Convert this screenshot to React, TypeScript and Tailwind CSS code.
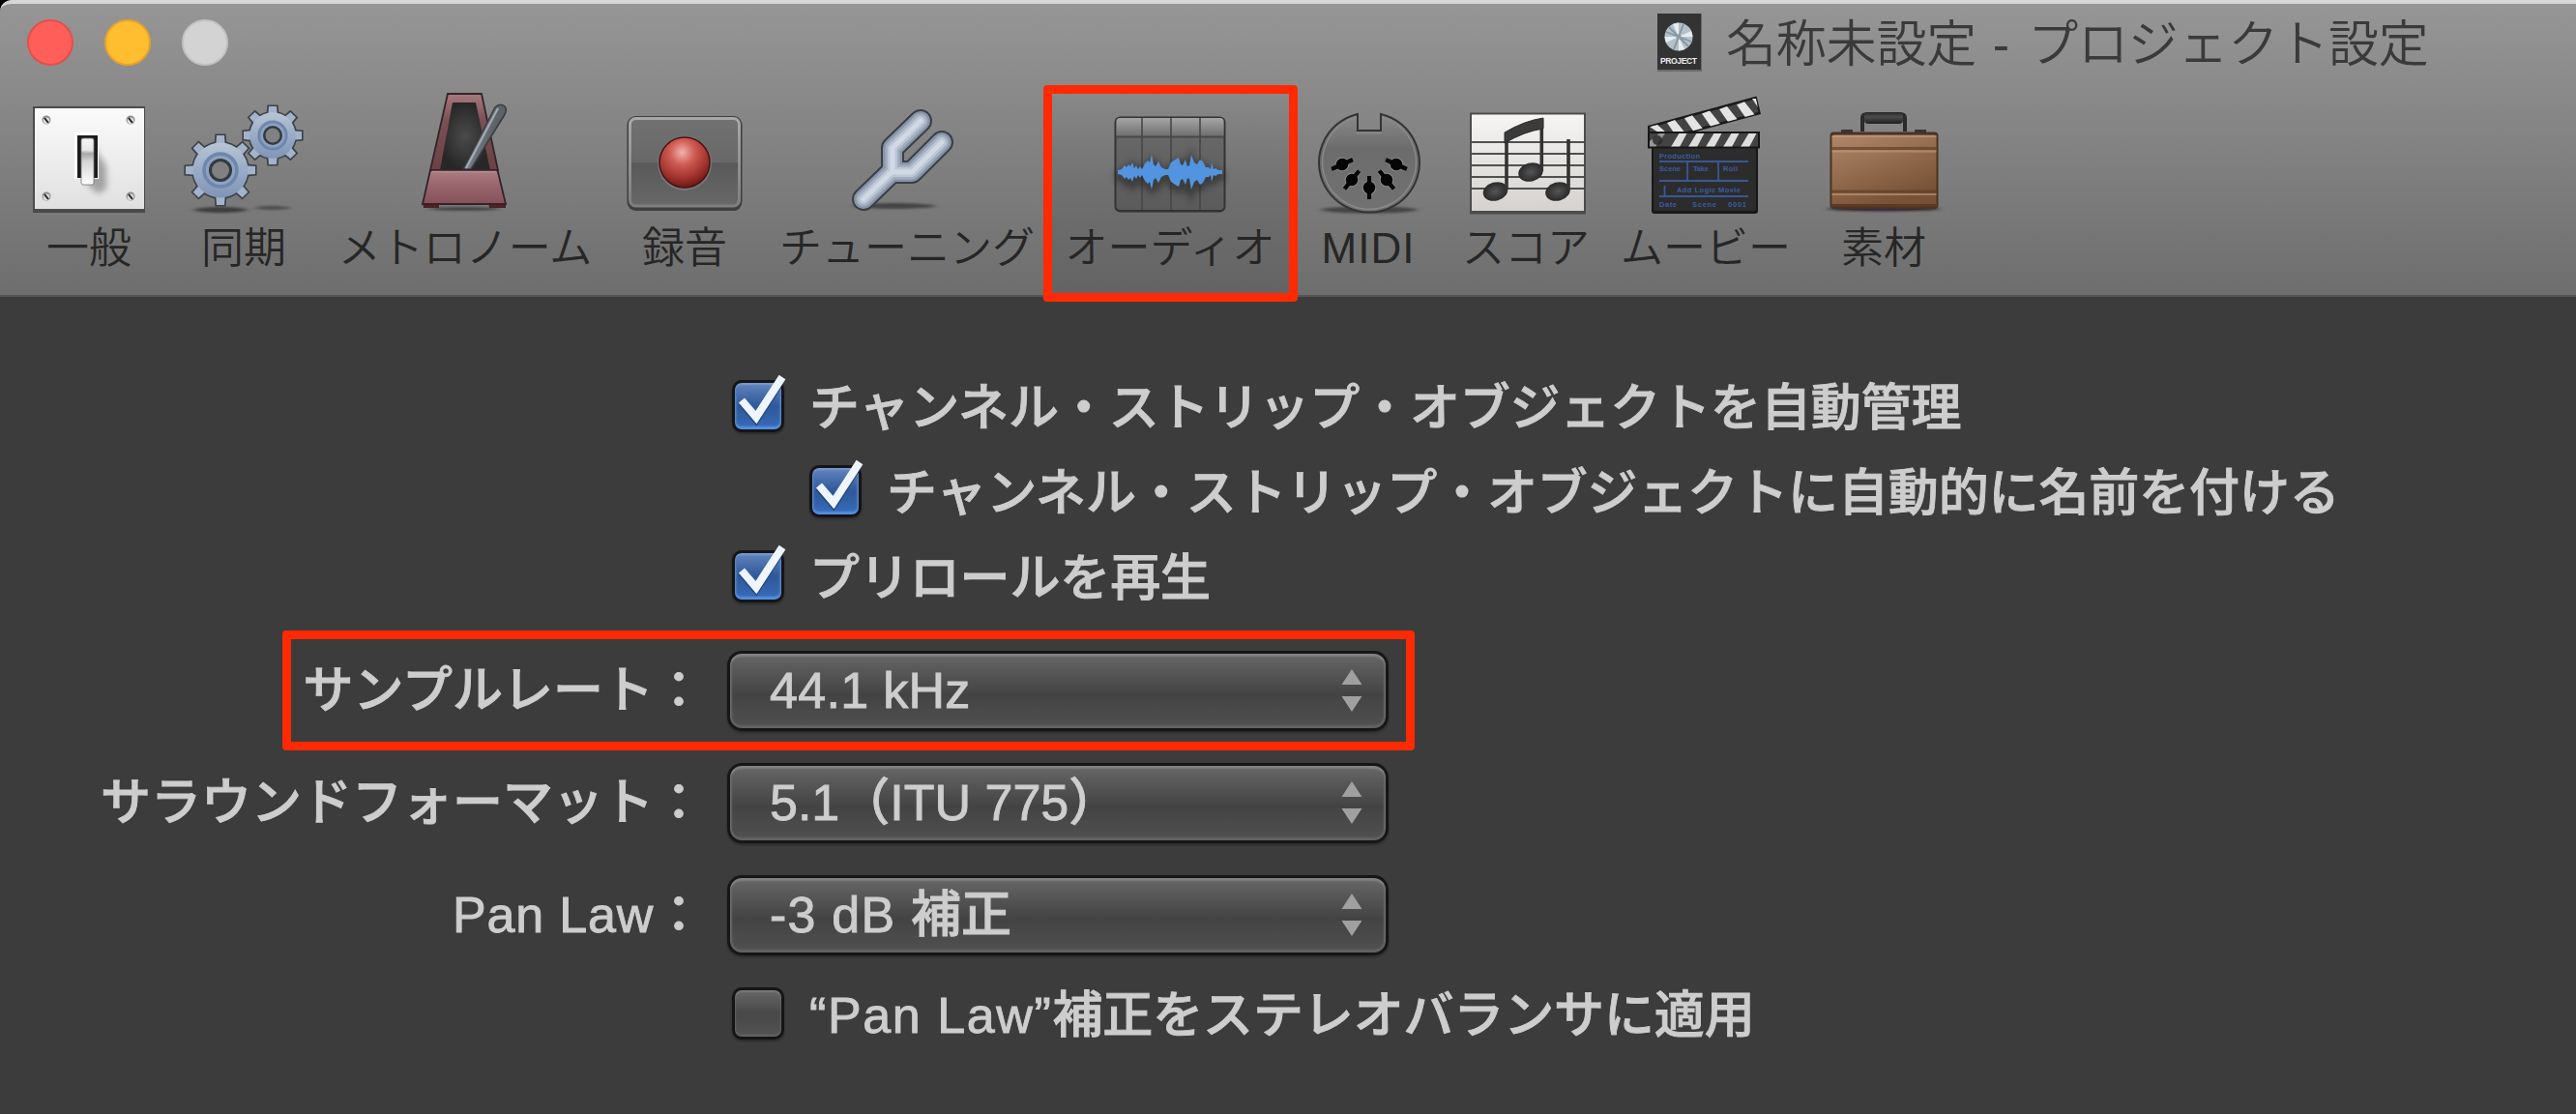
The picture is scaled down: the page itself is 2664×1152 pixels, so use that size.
import type { ReactNode } from "react";

// Every toolbar icon shares one artboard, the viewBox picks its own slice.
const Icon = ({ x, w, children }: { x: number; w: number; children: ReactNode }) => (
  <svg width={w} height={136} viewBox={`${x} 88 ${w} 136`} className="block shrink-0">
    {children}
  </svg>
);

const Screw = ({ x, y }: { x: number; y: number }) => (
  <g>
    <circle cx={x} cy={y} r="4.5" fill="#8e8e8e" />
    <circle cx={x} cy={y + 0.8} r="3.4" fill="#dcdcdc" />
    <path d={`M${x - 2} ${y - 2}l4 5`} stroke="#222" strokeWidth="2" />
  </g>
);

const GeneralIcon = () => (
  <Icon x={32} w={120}>
    <defs>
      <linearGradient id="plate" x1="0" y1="0" x2="0" y2="1">
        <stop offset="0" stopColor="#fbfbfb" />
        <stop offset="1" stopColor="#e0e0e0" />
      </linearGradient>
      <linearGradient id="lever" x1="0" y1="0" x2="0" y2="1">
        <stop offset="0" stopColor="#f4f4f4" />
        <stop offset="0.25" stopColor="#e8e8e8" />
        <stop offset="0.33" stopColor="#a8a8a8" />
        <stop offset="0.5" stopColor="#d5d5d5" />
        <stop offset="1" stopColor="#ffffff" />
      </linearGradient>
      <filter id="soft" x="-50%" y="-50%" width="200%" height="200%">
        <feGaussianBlur stdDeviation="3" />
      </filter>
    </defs>
    <rect x="34" y="110" width="116" height="110" fill="#4a4a4a" />
    <rect x="36" y="112" width="113" height="104" fill="url(#plate)" />
    <Screw x={48} y={124} />
    <Screw x={135} y={124} />
    <Screw x={48} y={203} />
    <Screw x={135} y={203} />
    <path d="M96 150L110 172V196L100 200L90 190Z" fill="#8b8b8b" opacity="0.75" filter="url(#soft)" />
    <rect x="77" y="137" width="25" height="48" fill="#fff" />
    <rect x="80" y="140" width="21" height="44" fill="#1c1c1c" />
    <rect x="84" y="143" width="13" height="48" rx="2" fill="url(#lever)" stroke="#777" strokeWidth="0.8" />
  </Icon>
);

const Gear = ({ cx, cy, r }: { cx: number; cy: number; r: number }) => {
  const body = r * 0.79;
  const teeth = [0, 45, 90, 135, 180, 225, 270, 315];
  return (
    <g transform={`translate(${cx} ${cy})`}>
      {[0, 1].map((layer) => (
        <g key={layer} fill={layer ? "url(#steel)" : "#3c4149"}>
          {teeth.map((a) => {
            const g = layer ? 0 : 1.6;
            return (
              <path
                key={a}
                transform={`rotate(${a})`}
                fill={layer ? "#a3b3c9" : "#3c4149"}
                d={`M${-4 - g} ${-r - g}h${8 + 2 * g}l1 ${r * 0.4}h${-10 - 2 * g}z`}
              />
            );
          })}
          <circle r={body + (layer ? 0 : 1.6)} />
        </g>
      ))}
      <circle r={r * 0.52} fill="#6f87ac" />
      <circle r={r * 0.42} fill="#8fa3c1" />
      <circle r={r * 0.335} fill="#343a44" />
      <circle r={r * 0.25} fill="#818181" />
    </g>
  );
};

const SyncIcon = () => (
  <Icon x={182} w={140}>
    <defs>
      <linearGradient id="steel" x1="0" y1="0" x2="0" y2="1">
        <stop offset="0" stopColor="#b9c5d5" />
        <stop offset="0.5" stopColor="#98abc7" />
        <stop offset="1" stopColor="#8094b6" />
      </linearGradient>
      <filter id="floor" x="-30%" y="-150%" width="160%" height="400%">
        <feGaussianBlur stdDeviation="3.5 1.3" />
      </filter>
    </defs>
    <ellipse cx="228" cy="217" rx="27" ry="3" fill="#3d3d3d" filter="url(#floor)" />
    <ellipse cx="282" cy="215" rx="18" ry="2.2" fill="#505050" filter="url(#floor)" />
    <Gear cx={282} cy={140} r={30} />
    <Gear cx={228} cy={176} r={36} />
  </Icon>
);

const MetronomeIcon = () => (
  <Icon x={421} w={120}>
    <defs>
      <linearGradient id="wood" x1="0" y1="0" x2="0" y2="1">
        <stop offset="0" stopColor="#a87a7f" />
        <stop offset="0.35" stopColor="#7b5054" />
        <stop offset="1" stopColor="#6b4145" />
      </linearGradient>
      <linearGradient id="front" x1="0" y1="0" x2="0" y2="1">
        <stop offset="0" stopColor="#ad7e82" />
        <stop offset="0.4" stopColor="#99686f" />
        <stop offset="1" stopColor="#875059" />
      </linearGradient>
      <radialGradient id="hollow">
        <stop offset="0" stopColor="#4b4b4b" />
        <stop offset="1" stopColor="#272727" />
      </radialGradient>
      <linearGradient id="rod" x1="0" y1="0" x2="1" y2="0.55">
        <stop offset="0.3" stopColor="#8f949c" />
        <stop offset="0.7" stopColor="#5d6168" />
      </linearGradient>
    </defs>
    <ellipse cx="480" cy="216" rx="36" ry="2" fill="#444" filter="url(#floor)" />
    <path d="M437 209h17v6h-16zM505 209h18v6h-17z" fill="#4e2125" />
    <path d="M463 97H498L515 176H445Z" fill="url(#wood)" stroke="#31262a" strokeWidth="1.8" />
    <path d="M468 106H492L507 176H455Z" fill="url(#hollow)" />
    <path d="M479 175L512 111Q517 106 522 110Q525 114 521 120L487 175Z" fill="url(#rod)" stroke="#3a3d42" strokeWidth="1.6" />
    <path d="M482 174L515 112" stroke="#a4abb5" strokeWidth="2" />
    <path d="M445 176H514.500L523 211H437Z" fill="url(#front)" stroke="#34222a" strokeWidth="1.8" />
    <path d="M447 177.500H513" stroke="#b98e92" strokeWidth="1.5" />
  </Icon>
);

const RecordIcon = () => (
  <Icon x={640} w={136}>
    <defs>
      <linearGradient id="recPad" x1="0" y1="0" x2="0" y2="1">
        <stop offset="0" stopColor="#727272" />
        <stop offset="0.5" stopColor="#686868" />
        <stop offset="0.51" stopColor="#595959" />
        <stop offset="1" stopColor="#686868" />
      </linearGradient>
      <linearGradient id="recRim" x1="0" y1="0" x2="0" y2="1">
        <stop offset="0" stopColor="#a8a8a8" />
        <stop offset="1" stopColor="#7e7e7e" />
      </linearGradient>
      <radialGradient id="ball" cx="0.45" cy="0.3" r="0.7">
        <stop offset="0" stopColor="#f0b3ab" />
        <stop offset="0.35" stopColor="#cf5c55" />
        <stop offset="0.7" stopColor="#a63631" />
        <stop offset="1" stopColor="#6f1715" />
      </radialGradient>
    </defs>
    <rect x="648.500" y="120" width="119" height="98" rx="9" fill="#3f3f3f" />
    <rect x="651.500" y="122.500" width="113" height="90.500" rx="6" fill="url(#recPad)" stroke="url(#recRim)" strokeWidth="3" />
    <circle cx="708" cy="169" r="28" fill="#808080" opacity="0.7" />
    <circle cx="708" cy="168" r="26" fill="url(#ball)" stroke="#471514" strokeWidth="1.5" />
  </Icon>
);

const forkPath = "M952 125L923 153V177L893 206M974 147L943 178H923";

const TuningIcon = () => (
  <Icon x={858} w={160}>
    <ellipse cx="925" cy="213" rx="42" ry="3" fill="#454545" filter="url(#floor)" />
    <g fill="none" strokeLinecap="round" strokeLinejoin="round">
      <path d={forkPath} stroke="#3a3f47" strokeWidth="24" />
      <path d={forkPath} stroke="#8895a8" strokeWidth="20" />
      <path d={forkPath} stroke="#a3afc0" strokeWidth="15" />
      <path d={forkPath} stroke="#bcc6d4" strokeWidth="10" />
      <path d={forkPath} stroke="#d0d9e5" strokeWidth="5" />
    </g>
  </Icon>
);

const wave = [
  [0, 2], [4, 3], [7, 7], [9, 5], [11, 8], [13, 6], [15, 10], [17, 4], [19, 7], [21, 3], [23, 6], [25, 3],
  [28, 9], [31, 12], [33, 10], [35, 18], [37, 8], [39, 6], [42, 11], [45, 5], [49, 3], [52, 3], [55, 10], [58, 12],
  [61, 14], [63, 15], [65, 8], [67, 7], [70, 13], [72, 6], [74, 7], [76, 18], [79, 10], [82, 8], [85, 13], [88, 11],
  [91, 5], [94, 5], [96, 3], [97, 10], [99, 3], [101, 4], [104, 2], [108, 2],
];
const wavePath =
  "M" +
  wave.map(([x, h]) => `${1156 + x} ${178 - h}`).join("L") +
  "L" +
  [...wave].reverse().map(([x, h]) => `${1156 + x} ${178 + h}`).join("L") +
  "Z";

const AudioIcon = () => (
  <Icon x={1140} w={140}>
    <defs>
      <linearGradient id="ruler" x1="0" y1="0" x2="0" y2="1">
        <stop offset="0" stopColor="#a6a6a6" />
        <stop offset="1" stopColor="#6e6e6e" />
      </linearGradient>
      <linearGradient id="region" x1="0" y1="0" x2="0" y2="1">
        <stop offset="0" stopColor="#6a6a6a" />
        <stop offset="1" stopColor="#5b5b5b" />
      </linearGradient>
    </defs>
    <rect x="1152.500" y="120.500" width="115" height="99" rx="6" fill="#333" />
    <rect x="1154.500" y="122" width="111" height="95" rx="4" fill="url(#region)" />
    <path d="M1154.500 141V126q0-4 4-4H1261.500q4 0 4 4V141Z" fill="url(#ruler)" />
    <path d="M1154 141.500H1266" stroke="#484848" strokeWidth="2" />
    <path d="M1181 122V217M1211 122V217M1241 122V217" stroke="#474747" strokeWidth="1.600" />
    <path d={wavePath} transform="translate(0 4)" fill="#222" stroke="#222" strokeWidth="6" opacity="0.55" filter="url(#soft)" />
    <path d={wavePath} fill="#5294df" />
  </Icon>
);

const pins = [
  [1388, 170, 66],
  [1398, 186, 39],
  [1416, 194, 0],
  [1434, 186, -39],
  [1444, 170, -66],
];

const MidiIcon = () => (
  <Icon x={1350} w={130}>
    <defs>
      <linearGradient id="din" x1="0" y1="0" x2="0" y2="1">
        <stop offset="0" stopColor="#8a8a8a" />
        <stop offset="0.35" stopColor="#6c6c6c" />
        <stop offset="1" stopColor="#727272" />
      </linearGradient>
    </defs>
    <ellipse cx="1416" cy="217" rx="50" ry="3.500" fill="#444" filter="url(#floor)" />
    <path
      d="M1404 118V135H1428V118A52 51.500 0 1 1 1404 118Z"
      fill="url(#din)"
      stroke="#333"
      strokeWidth="2"
    />
    <path d="M1401.500 121.500A48.500 48.500 0 1 0 1430.500 121.500M1403 137.500H1429" fill="none" stroke="#8c8c8c" strokeWidth="1.300" />
    {pins.map(([x, y, a]) => (
      <g key={x} transform={`translate(${x} ${y}) rotate(${a})`}>
        <path d="M0 -12V12" stroke="#8f8f8f" strokeWidth="6" />
        <circle r="7.300" fill="#8f8f8f" />
        <path d="M0 -12V12" stroke="#050505" strokeWidth="4.500" />
        <circle r="6.300" fill="#050505" />
      </g>
    ))}
  </Icon>
);

const ScoreIcon = () => (
  <Icon x={1510} w={136}>
    <defs>
      <linearGradient id="paper" x1="0" y1="0" x2="0" y2="1">
        <stop offset="0" stopColor="#f6f5f3" />
        <stop offset="1" stopColor="#d5d2cf" />
      </linearGradient>
      <radialGradient id="head">
        <stop offset="0" stopColor="#555" />
        <stop offset="1" stopColor="#2a2a2a" />
      </radialGradient>
    </defs>
    <rect x="1520" y="116.500" width="120" height="105" fill="#4c4c4c" />
    <rect x="1522" y="118.500" width="116" height="99.500" fill="url(#paper)" />
    <path d="M1522 147H1638M1522 159H1638M1522 171H1638M1522 183H1638M1522 195H1638" stroke="#505050" strokeWidth="2" />
    <g fill="url(#head)">
      <ellipse cx="1546.500" cy="198" rx="13" ry="9.500" transform="rotate(-16 1546.500 198)" />
      <ellipse cx="1583" cy="178" rx="13" ry="9.500" transform="rotate(-16 1583 178)" />
      <ellipse cx="1611" cy="198" rx="13" ry="9.500" transform="rotate(-16 1611 198)" />
    </g>
    <path d="M1558 138V196M1594.300 124V177M1622 144V196" stroke="#333" strokeWidth="3.600" />
    <path d="M1556 137Q1576 125 1596 122V133Q1576 136 1556 148Z" fill="#3b3b3b" stroke="#2b2b2b" strokeWidth="1" />
  </Icon>
);

const MovieIcon = () => (
  <Icon x={1694} w={140}>
    <defs>
      <clipPath id="armClip">
        <path d="M1705.500 131L1816 101L1819.500 117L1748 136H1706Z" />
      </clipPath>
      <clipPath id="barClip">
        <rect x="1706" y="138" width="112" height="13.500" />
      </clipPath>
    </defs>
    <rect x="1708" y="150" width="110" height="71" rx="3" fill="#181818" />
    <rect x="1710" y="152" width="106" height="66" rx="2" fill="#2c2c2c" />
    <rect x="1704" y="136" width="116" height="17.500" fill="#161616" />
    <rect x="1706" y="138" width="112" height="13.500" fill="#434343" />
    <g clipPath="url(#barClip)" fill="#dedede">
      {[1737, 1755, 1773, 1791, 1809].map((x) => (
        <path key={x} d={`M${x} 137h8l-8 15h-9z`} />
      ))}
      <path d="M1706 146l10-8h6l-10 14h-6z" opacity="0.55" />
    </g>
    <path d="M1704 130L1816.500 99.500L1821 118L1750 137H1704Z" fill="#191919" />
    <path d="M1706 132L1815 102.500L1818.500 116L1744 136H1706Z" fill="#434343" />
    <g clipPath="url(#armClip)" fill="#e4e4e4">
      {[1724, 1742, 1760, 1778, 1796].map((x, i) => (
        <path key={x} d={`M${x} ${127 - i * 4.7}l8 -3l12 15l-9 4z`} />
      ))}
      <path d="M1706 131l8-2l9 8h-8zM1812 102l4 0l2 9z" />
    </g>
    <circle cx="1714" cy="145" r="5" fill="#252525" opacity="0.8" />
    <g stroke="#3b5794" strokeWidth="1.800">
      <path d="M1716 167H1808M1716 187H1808M1716 203H1808M1745 167V187M1777 167V187M1721.500 192V202" />
    </g>
    <g fill="#3c5ba0" className="font-['Liberation_Sans'] text-[7.500px] font-bold">
      <text x="1716" y="163.500" textLength="42">Production</text>
      <text x="1716" y="176.500" textLength="22">Scene</text>
      <text x="1751" y="176.500" textLength="16">Take</text>
      <text x="1782" y="176.500" textLength="15">Roll</text>
      <text x="1734" y="198.500" textLength="66">Add Logic Movie</text>
      <text x="1716" y="214" textLength="18">Date</text>
      <text x="1750" y="214" textLength="25">Scene</text>
      <text x="1787" y="214" textLength="19">0001</text>
    </g>
  </Icon>
);

const AssetsIcon = () => (
  <Icon x={1880} w={136}>
    <defs>
      <linearGradient id="leather" x1="0" y1="0" x2="0.500" y2="1">
        <stop offset="0" stopColor="#b0876a" />
        <stop offset="1" stopColor="#775135" />
      </linearGradient>
      <linearGradient id="grip" x1="0" y1="0" x2="0" y2="1">
        <stop offset="0" stopColor="#262626" />
        <stop offset="0.400" stopColor="#4c4c4c" />
        <stop offset="1" stopColor="#202020" />
      </linearGradient>
    </defs>
    <ellipse cx="1948" cy="216" rx="58" ry="2.500" fill="#2c2c3a" filter="url(#floor)" />
    <path d="M1904 134h12v4h-12zM1980 134h12v4h-12z" fill="#353535" />
    <path d="M1926 136V122q0-4 5-4H1965q5 0 5 4V136" fill="none" stroke="#2b2b2b" strokeWidth="4" />
    <rect x="1928" y="116" width="40" height="12" rx="4" fill="url(#grip)" />
    <rect x="1892.500" y="136.500" width="112" height="79.500" rx="4" fill="#4b3223" />
    <rect x="1894.500" y="139.500" width="108" height="74.500" rx="2" fill="url(#leather)" />
    <path d="M1894.500 141H2002.500M1894.500 156.500H2002.500M1894.500 201H2002.500" stroke="#c69d7d" strokeWidth="1.800" opacity="0.600" />
    <path d="M1894.500 153.500H2002.500M1894.500 198H2002.500" stroke="#5c3d26" strokeWidth="3" opacity="0.650" />
    <path d="M1894.500 212.500H2002.500" stroke="#5c3a22" strokeWidth="3" />
  </Icon>
);

const activeTab = "bg-linear-to-b from-black/0 via-black/10 to-black/10";

const tabs = [
  { label: "一般", icon: <GeneralIcon />, className: "w-[120px]" },
  { label: "同期", icon: <SyncIcon />, className: "w-[200px]" },
  { label: "メトロノーム", icon: <MetronomeIcon />, className: "w-[258px]" },
  { label: "録音", icon: <RecordIcon />, className: "w-[196px]" },
  { label: "チューニング", icon: <TuningIcon />, className: "w-[264px]" },
  { label: "オーディオ", icon: <AudioIcon />, className: `mx-[14px] w-[252px] ${activeTab}` },
  { label: "MIDI", icon: <MidiIcon />, className: "w-[130px] tracking-[1px]" },
  { label: "スコア", icon: <ScoreIcon />, className: "w-[196px]" },
  { label: "ムービー", icon: <MovieIcon />, className: "w-[176px]" },
  { label: "素材", icon: <AssetsIcon />, className: "w-[192px]" },
];

const Highlight = ({ className }: { className: string }) => (
  <div className={`pointer-events-none absolute rounded-[4px] border-[9.5px] border-[#ff2a04] ${className}`} />
);

const ProjectIcon = () => (
  <svg width="46" height="60" viewBox="0 0 46 60" className="block shrink-0">
    <rect width="46" height="60" fill="#6b6b6b" />
    <rect width="45" height="58" fill="#333" />
    <circle cx="22" cy="24" r="14.500" fill="#b4c1ca" />
    <g fill="#e6edf1">
      <path d="M22 24L16 11L22 9.500ZM22 24L35 18L36.500 24ZM22 24L28 37L22 38.500ZM22 24L9 30L7.500 24Z" />
    </g>
    <g stroke="#8595a1" strokeWidth="1.800">
      <path d="M27 11L17 37M9 19L35 29M12 14L32 34" />
    </g>
    <circle cx="22" cy="24" r="2.500" fill="#8d9aa4" />
    <text x="3" y="52" textLength="38" fill="#eee" className="font-['Liberation_Sans'] text-[8.5px] font-bold">
      PROJECT
    </text>
  </svg>
);

const Checkbox = ({ checked, label }: { checked?: boolean; label: ReactNode }) => (
  <label className="flex h-[88px] items-center">
    <span
      className={
        checked
          ? "relative block size-[54px] rounded-[10px] border-[3px] border-[#151515] bg-linear-to-b from-[#6384bd] via-[#2d5899] to-[#3a6dbb] shadow-[0_2px_2px_#2c2c2c,inset_0_-3px_2px_#5590e0,inset_0_2px_2px_#7c9ccd,inset_2px_0_2px_#4a76b8,inset_-2px_0_2px_#4a76b8]"
          : "relative block size-[54px] rounded-[10px] border-[3px] border-[#151515] bg-linear-to-b from-[#686868] via-[#484848] to-[#535353] shadow-[0_2px_2px_#2c2c2c,inset_0_2px_2px_#7a7a7a,inset_0_-2px_2px_#666]"
      }
    >
      {checked && (
        <svg width="60" height="64" viewBox="0 0 60 64" className="absolute -top-[13px] -left-[3px]">
          <path d="M10 33L25 51L50 12" fill="none" stroke="#183766" strokeWidth="8" opacity="0.6" />
          <path d="M10 31L25 48.500L52 7" fill="none" stroke="#eff5ff" strokeWidth="8" />
        </svg>
      )}
    </span>
    <span className="ml-[26px] pt-[3px] tracking-[-0.13px] whitespace-nowrap">{label}</span>
  </label>
);

const Popup = ({ value }: { value: ReactNode }) => (
  <div className="flex h-[83px] w-[684px] items-center justify-between rounded-[15px] border-[3px] border-[#161616] bg-linear-to-b from-[#676767] via-[#434343] via-55% to-[#515151] pr-6 pl-[41px] shadow-[0_2px_2px_#2b2b2b,inset_0_3px_2px_#828282,inset_0_-3px_2px_#636363,inset_2px_0_2px_#666,inset_-2px_0_2px_#666]">
    <span className="whitespace-pre">{value}</span>
    <svg width="22" height="44" viewBox="0 0 22 44" className="block">
      <path d="M11 0L21.500 16H0.500ZM0.500 28H21.500L11 44Z" fill="#a0a0a0" />
    </svg>
  </div>
);

const Row = ({ label, value }: { label: ReactNode; value: ReactNode }) => (
  <div className="flex h-[116px] items-center">
    <span className="w-[728px] text-right whitespace-nowrap">{label}：</span>
    <div className="ml-6">
      <Popup value={value} />
    </div>
  </div>
);

const App = () => {
  return (
    <div className="relative h-[1152px] w-[2664px] overflow-hidden bg-black font-['Liberation_Sans','Noto_Sans_CJK_JP',sans-serif]">
      <header className="h-[307px] rounded-tl-[12px] border-t-4 border-b-2 border-t-[#d6d6d6] border-b-[#555] bg-linear-to-b from-[#969696] to-[#6e6e6e]">
        <div className="flex h-[84px]">
          <div className="flex gap-8 pt-4 pl-7">
            <span className="size-12 rounded-full border-2 border-[#e2504b] bg-[#ff5f58]" />
            <span className="size-12 rounded-full border-2 border-[#e5a32c] bg-[#ffbe2f]" />
            <span className="size-12 rounded-full border-2 border-[#c2c2c2] bg-[#d3d3d3]" />
          </div>
          <div className="ml-[1478px] flex pt-[10px]">
            <ProjectIcon />
            <h1 className="ml-[25px] h-[60px] text-[52px] leading-[65px] font-[350] tracking-[-0.2px] whitespace-pre text-[#3a3a3a]">
              名称未設定<span className="tracking-[2.3px]"> - </span>プロジェクト設定
            </h1>
          </div>
        </div>
        <nav className="flex pl-8">
          {tabs.map((tab) => (
            <div key={tab.label} className={`flex h-[217px] flex-col items-center ${tab.className}`}>
              {tab.icon}
              <span className="text-[44px] leading-[66px] font-[350] whitespace-nowrap text-[#262626]">{tab.label}</span>
            </div>
          ))}
        </nav>
      </header>

      <main className="h-[845px] bg-[#3c3c3c] pt-[69px] text-[52px] leading-[60px] font-medium text-[#cdcdcd] [-webkit-text-stroke:0.9px_#cdcdcd]">
        <div className="pl-[757px]">
          <Checkbox checked label="チャンネル・ストリップ・オブジェクトを自動管理" />
          <div className="pl-20">
            <Checkbox checked label="チャンネル・ストリップ・オブジェクトに自動的に名前を付ける" />
          </div>
          <Checkbox checked label="プリロールを再生" />
        </div>
        <div className="pt-4">
          <Row label="サンプルレート" value={<span className="tracking-[0.3px]">44.1 kHz</span>} />
          <Row label="サラウンドフォーマット" value="5.1（ITU 775）" />
          <Row
            label={<span className="tracking-[0.8px]">Pan Law</span>}
            value={
              <>
                <span className="tracking-[1.2px]">-3 dB </span>補正
              </>
            }
          />
        </div>
        <div className="pl-[757px]">
          <Checkbox
            label={
              <>
                <span className="tracking-[1.6px]">“Pan Law”</span>補正をステレオバランサに適用
              </>
            }
          />
        </div>
      </main>

      <Highlight className="top-[88px] left-[1079px] h-[224px] w-[263px]" />
      <Highlight className="top-[652px] left-[292px] h-[124px] w-[1171px]" />
    </div>
  );
};

export default App;
